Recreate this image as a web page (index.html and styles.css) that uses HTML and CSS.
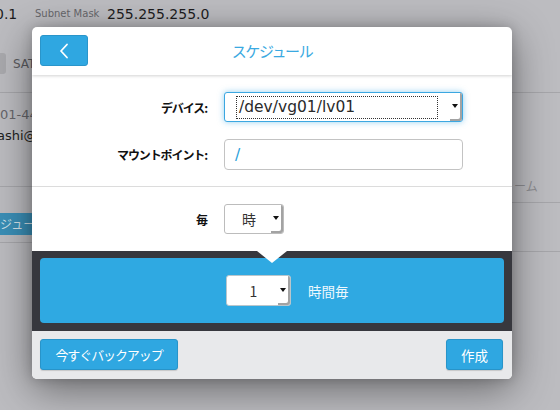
FILE: index.html
```html
<!DOCTYPE html>
<html lang="ja">
<head>
<meta charset="utf-8">
<title>スケジュール</title>
<link rel="stylesheet" href="styles.css">
</head>
<body>
<div class="page">
  <div class="bg-top">
    <span class="bg-ip">0.1</span>
    <span class="bg-label">Subnet Mask</span>
    <span class="bg-mask">255.255.255.0</span>
  </div>
  <div class="bg-tabs">
    <span class="bg-tabbox"></span>
    <span class="bg-tab">SAT</span>
  </div>
  <div class="bg-cols">
    <div class="bg-left">
      <div class="bg-info">
        <div class="bg-phone">01-4455</div>
        <div class="bg-mail">ashi@example.jp</div>
      </div>
      <div class="bg-lsec">
        <div class="bg-btn">ジュール</div>
      </div>
      <div class="bg-lrest"></div>
    </div>
    <div class="bg-right">
      <div class="bg-rtext">ーム</div>
      <div class="bg-rsec"></div>
      <div class="bg-rrest"></div>
    </div>
  </div>
</div>

<div class="modal">
  <div class="m-head">
    <button class="back" type="button" aria-label="戻る">
      <svg width="10" height="16" viewBox="0 0 10 16"><polyline points="8,1.5 2,8 8,14.5" fill="none" stroke="#fff" stroke-width="1.8" stroke-linecap="round" stroke-linejoin="round"/></svg>
    </button>
    <div class="m-title">スケジュール</div>
    <div class="m-spacer"></div>
  </div>

  <div class="m-sec m-sec1">
    <div class="frow">
      <label class="flabel">デバイス:</label>
      <div class="sel sel-focus">
        <span class="sel-val sel-val-dev"><span class="focus-ring">/dev/vg01/lv01</span></span>
        <span class="sel-arrow"><span class="tri"></span></span>
      </div>
    </div>
    <div class="frow frow2">
      <label class="flabel">マウントポイント:</label>
      <div class="inp">/</div>
    </div>
  </div>

  <div class="m-sec m-sec2">
    <div class="frow">
      <label class="flabel">毎</label>
      <div class="sel sel-small">
        <span class="sel-val sel-val-c">時</span>
        <span class="sel-arrow"><span class="tri"></span></span>
      </div>
    </div>
  </div>

  <div class="band">
    <span class="pointer"></span>
    <div class="panel">
      <div class="sel sel-num">
        <span class="sel-val sel-val-c">1</span>
        <span class="sel-arrow"><span class="tri"></span></span>
      </div>
      <span class="panel-text">時間毎</span>
    </div>
  </div>

  <div class="m-foot">
    <button class="btn btn-backup" type="button">今すぐバックアップ</button>
    <button class="btn btn-create" type="button">作成</button>
  </div>
</div>
</body>
</html>
```

FILE: styles.css
```css
* { box-sizing: border-box; margin: 0; padding: 0; }
html, body { width: 560px; height: 410px; overflow: hidden; }
body {
  background: #bcbcc0;
  font-family: "DejaVu Sans", "Noto Sans CJK JP", sans-serif;
  color: #222;
  position: relative;
}

/* ---------- dimmed page behind the dialog ---------- */
.page { width: 560px; height: 410px; display: flex; flex-direction: column; }
.bg-top {
  height: 27px;
  display: flex;
  align-items: center;
}
.bg-ip { font-size: 14px; color: #1c1c1e; margin-left: -5px; width: 40px; }
.bg-label { font-size: 10px; color: #67676b; width: 72px; }
.bg-mask { font-size: 14px; color: #1c1c1e; }
.bg-tabs {
  height: 66px;
  display: flex;
  align-items: center;
  gap: 7px;
  padding-top: 8px;
  border-bottom: 1px solid #a6a6aa;
}
.bg-tabbox { width: 6px; height: 21px; background: #a9a9ad; border-radius: 0 3px 3px 0; }
.bg-tab { font-size: 12px; color: #5b5b5f; }
.bg-cols { flex: 1; display: flex; justify-content: space-between; }
.bg-left { width: 32px; display: flex; flex-direction: column; }
.bg-info { height: 93px; padding-top: 12px; font-size: 13px; white-space: nowrap; }
.bg-phone { color: #66666a; line-height: 20px; }
.bg-mail { color: #1e1e20; line-height: 22px; margin-left: -3px; }
.bg-lsec {
  border-top: 1px solid #a6a6aa;
  height: 57px;
  padding-top: 26px;
  border-bottom: 1px solid #a6a6aa;
  width: 120px;
}
.bg-btn {
  height: 22px;
  width: 90px;
  background: #3a8fb7;
  color: #d6e4ec;
  font-size: 12px;
  line-height: 22px;
  white-space: nowrap;
  font-family: "Noto Sans CJK JP", sans-serif;
}
.bg-right { width: 48px; display: flex; flex-direction: column; }
.bg-rtext {
  height: 109px;
  padding-top: 84px;
  font-size: 12px;
  color: #8d8d91;
  padding-left: 2px;
  font-family: "Noto Sans CJK JP", sans-serif;
  white-space: nowrap;
}
.bg-rsec { height: 50px; border-top: 1px solid #a6a6aa; border-bottom: 1px solid #a6a6aa; }

/* ---------- dialog ---------- */
.modal {
  position: absolute;
  left: 32px;
  top: 27px;
  width: 480px;
  height: 352px;
  background: #fff;
  border-radius: 5px;
  box-shadow: 0 10px 40px rgba(0, 0, 0, 0.45), 0 0 12px rgba(0,0,0,0.18);
  display: flex;
  flex-direction: column;
  overflow: hidden;
}
.m-head {
  height: 48px;
  flex: none;
  display: grid;
  grid-template-columns: 48px 1fr 48px;
  align-items: center;
  padding: 0 8px;
  box-shadow: 0 1px 3px rgba(0, 0, 0, 0.18);
  position: relative;
  z-index: 1;
}
.back {
  width: 48px;
  height: 31px;
  background: #2fa7e1;
  border: 1px solid #2a95ca;
  border-radius: 3px;
  display: flex;
  align-items: center;
  justify-content: center;
  margin-top: -1px;
}
.back svg { display: block; margin-left: -1px; }
.m-title {
  text-align: center;
  font-family: "Noto Sans CJK JP", sans-serif;
  font-size: 15px;
  letter-spacing: -1.4px;
  color: #3aa9e1;
  margin-top: -2px;
}

.m-sec { flex: none; }
.m-sec1 { padding: 17px 0 16px; border-bottom: 1px solid #dcdcdc; }
.m-sec2 { padding: 17px 0 17px; }
.frow {
  display: grid;
  grid-template-columns: 176px 239px;
  column-gap: 16px;
  align-items: center;
  height: 30px;
}
.frow2 { margin-top: 17px; height: 31px; }
.flabel {
  text-align: right;
  font-family: "Noto Sans CJK JP", sans-serif;
  font-weight: bold;
  font-size: 12px;
  letter-spacing: -1.1px;
  color: #111;
  padding-right: 1px;
}

.sel {
  display: flex;
  align-items: stretch;
  height: 30px;
  background: #fff;
  border: 1px solid #bcbcbc;
  border-radius: 3px;
}
.sel-focus {
  border-color: #3ba7e1;
  box-shadow: 0 0 6px rgba(59, 167, 225, 0.55);
}
.sel-val { flex: 1; display: flex; align-items: center; }
.sel-val-dev { padding-left: 12px; }
.focus-ring {
  display: flex;
  align-items: center;
  width: 200px;
  height: 21px;
  padding-left: 2px;
  outline: 1px dotted #333;
  font-size: 15.5px;
  color: #2a2a2a;
}
.sel-val-c {
  justify-content: center;
  font-family: "Noto Sans CJK JP", sans-serif;
  font-size: 14px;
  color: #333;
  padding-left: 2px;
}
.sel-arrow {
  width: 12px;
  display: flex;
  align-items: center;
  justify-content: center;
  box-shadow: inset -2px -2px 0 #a3a3a3;
  border-radius: 0 2px 2px 0;
  padding: 0 2px 2px 0;
}
.tri {
  width: 0;
  height: 0;
  border-left: 3px solid transparent;
  border-right: 3px solid transparent;
  border-top: 4px solid #111;
}
.sel-small { width: 60px; }
.inp {
  height: 31px;
  border: 1px solid #c3c3c3;
  border-radius: 4px;
  display: flex;
  align-items: center;
  padding-left: 10px;
  font-size: 15.5px;
  color: #2a9fda;
}

.band {
  flex: none;
  height: 80px;
  background: #37383e;
  padding: 7px 8px 8px;
  position: relative;
}
.pointer {
  position: absolute;
  left: 225px;
  top: 0;
  width: 0;
  height: 0;
  border-left: 15px solid transparent;
  border-right: 15px solid transparent;
  border-top: 12px solid #fff;
  z-index: 2;
}
.panel {
  height: 65px;
  background: #2fa9e2;
  border-radius: 4px;
  display: flex;
  align-items: center;
  padding-left: 186px;
  gap: 17px;
}
.sel-num { width: 65px; height: 31px; border-color: #b9c6cc; }
.panel-text {
  font-family: "Noto Sans CJK JP", sans-serif;
  font-size: 13.5px;
  color: #eef8fd;
}

.m-foot {
  flex: 1;
  background: #e8e9eb;
  display: flex;
  justify-content: space-between;
  align-items: flex-start;
  padding: 8px 9px 0 8px;
}
.btn {
  height: 31px;
  background: #2fa7e1;
  border: 1px solid #2894c9;
  border-radius: 3px;
  color: #fff;
  font-family: "Noto Sans CJK JP", sans-serif;
  font-size: 13px;
  box-shadow: 0 1px 1px rgba(0, 0, 0, 0.15);
}
.btn-backup { width: 138px; letter-spacing: -1.1px; }
.btn-create { width: 57px; font-size: 13.5px; }
```
